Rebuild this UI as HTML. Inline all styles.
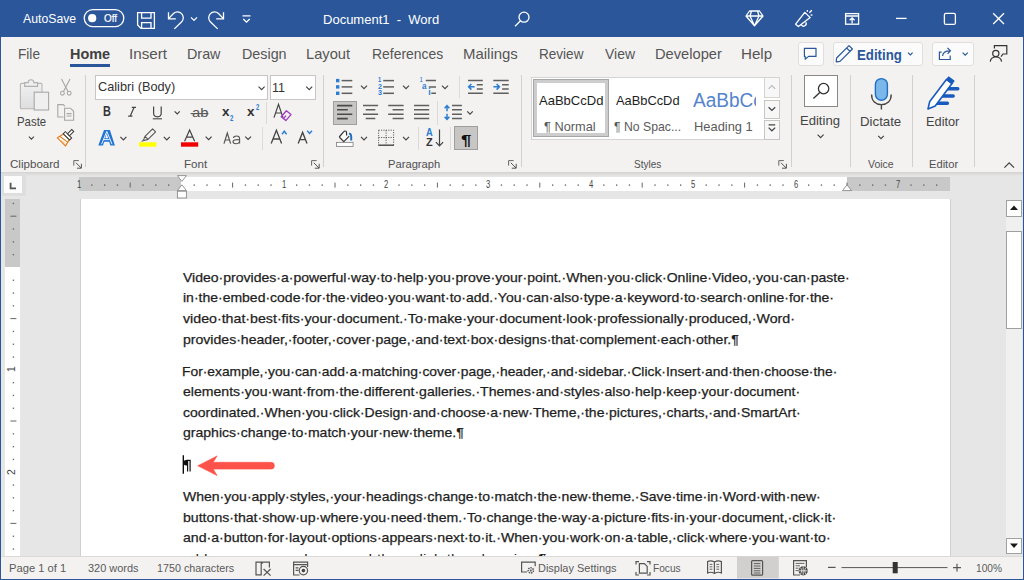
<!DOCTYPE html>
<html><head><meta charset="utf-8">
<style>
*{margin:0;padding:0;box-sizing:border-box}
html,body{width:1024px;height:580px;overflow:hidden;background:#2b579a;font-family:"Liberation Sans",sans-serif;position:relative}
.a{position:absolute}
.t{position:absolute;white-space:pre;line-height:1;transform-origin:0 0}
.sep{position:absolute;width:1px;background:#d2d0ce}
svg{position:absolute;overflow:visible}
</style></head><body>
<div class="a" style="left:0;top:0;width:1024px;height:37px;background:#2b579a"></div>
<div class="a" style="left:1px;top:37px;width:1022px;height:135px;background:#f3f2f1"></div>
<div class="a" style="left:1px;top:172px;width:1022px;height:384px;background:#e6e6e6"></div>
<div class="a" style="left:1px;top:556px;width:1022px;height:23px;background:#f3f2f1;border-top:1px solid #dcdad8"></div>
<div class="a" style="left:81px;top:199px;width:869px;height:357px;background:#fff"></div>
<div class="a" style="left:1px;top:172px;width:1022px;height:4px;background:linear-gradient(#d4d2d0,#e6e6e6)"></div>
<div class="a" style="left:2px;top:173px;width:24px;height:23px;background:#dedede"></div>
<div class="a" style="left:4px;top:176.4px;width:17.6px;height:16.4px;background:#fcfcfc"></div>
<div class="a" style="left:78.7px;top:176.9px;width:871px;height:14.1px;background:#fff"></div>
<div class="a" style="left:78.7px;top:176.9px;width:102.7px;height:14.1px;background:#c8c8c8"></div>
<div class="a" style="left:847px;top:176.9px;width:102.7px;height:14.1px;background:#c8c8c8"></div>
<div class="a" style="left:80px;top:199px;width:1px;height:357px;background:#d0d0d0"></div>
<div class="a" style="left:950px;top:199px;width:1px;height:357px;background:#cfcfcf"></div>
<div class="a" style="left:5px;top:199.1px;width:14.9px;height:357px;background:#fff"></div>
<div class="a" style="left:5px;top:199.1px;width:14.9px;height:68.3px;background:#c8c8c8"></div>
<div class="a" style="left:1006.2px;top:216.6px;width:15.6px;height:322px;background:#f0f0f0"></div>
<div class="a" style="left:1006.2px;top:200.4px;width:15.6px;height:16.2px;background:#fff;border:1px solid #a0a0a0"></div>
<div class="a" style="left:1006.2px;top:231.2px;width:15.6px;height:98px;background:#fff;border:1px solid #a0a0a0"></div>
<div class="a" style="left:1006.2px;top:538.3px;width:15.6px;height:15.6px;background:#fff;border:1px solid #a0a0a0"></div>
<svg width="1024" height="580" style="left:0;top:0"><path d="M10.6,182.8 V188.4 H16" fill="none" stroke="#555" stroke-width="1.8"/>
<rect x="91.2" y="184.4" width="1.3" height="1.4" fill="#666"/>
<rect x="104.0" y="184.4" width="1.3" height="1.4" fill="#666"/>
<rect x="116.8" y="184.4" width="1.3" height="1.4" fill="#666"/>
<path d="M130.2,182.6 V187.6" stroke="#666" stroke-width="1"/>
<rect x="142.4" y="184.4" width="1.3" height="1.4" fill="#666"/>
<rect x="155.2" y="184.4" width="1.3" height="1.4" fill="#666"/>
<rect x="168.0" y="184.4" width="1.3" height="1.4" fill="#666"/>
<rect x="193.6" y="184.4" width="1.3" height="1.4" fill="#666"/>
<rect x="206.4" y="184.4" width="1.3" height="1.4" fill="#666"/>
<rect x="219.2" y="184.4" width="1.3" height="1.4" fill="#666"/>
<path d="M232.6,182.6 V187.6" stroke="#666" stroke-width="1"/>
<rect x="244.8" y="184.4" width="1.3" height="1.4" fill="#666"/>
<rect x="257.6" y="184.4" width="1.3" height="1.4" fill="#666"/>
<rect x="270.4" y="184.4" width="1.3" height="1.4" fill="#666"/>
<rect x="296.0" y="184.4" width="1.3" height="1.4" fill="#666"/>
<rect x="308.8" y="184.4" width="1.3" height="1.4" fill="#666"/>
<rect x="321.6" y="184.4" width="1.3" height="1.4" fill="#666"/>
<path d="M335.0,182.6 V187.6" stroke="#666" stroke-width="1"/>
<rect x="347.2" y="184.4" width="1.3" height="1.4" fill="#666"/>
<rect x="360.0" y="184.4" width="1.3" height="1.4" fill="#666"/>
<rect x="372.8" y="184.4" width="1.3" height="1.4" fill="#666"/>
<rect x="398.4" y="184.4" width="1.3" height="1.4" fill="#666"/>
<rect x="411.2" y="184.4" width="1.3" height="1.4" fill="#666"/>
<rect x="424.0" y="184.4" width="1.3" height="1.4" fill="#666"/>
<path d="M437.4,182.6 V187.6" stroke="#666" stroke-width="1"/>
<rect x="449.6" y="184.4" width="1.3" height="1.4" fill="#666"/>
<rect x="462.4" y="184.4" width="1.3" height="1.4" fill="#666"/>
<rect x="475.2" y="184.4" width="1.3" height="1.4" fill="#666"/>
<rect x="500.8" y="184.4" width="1.3" height="1.4" fill="#666"/>
<rect x="513.6" y="184.4" width="1.3" height="1.4" fill="#666"/>
<rect x="526.4" y="184.4" width="1.3" height="1.4" fill="#666"/>
<path d="M539.8,182.6 V187.6" stroke="#666" stroke-width="1"/>
<rect x="552.0" y="184.4" width="1.3" height="1.4" fill="#666"/>
<rect x="564.8" y="184.4" width="1.3" height="1.4" fill="#666"/>
<rect x="577.6" y="184.4" width="1.3" height="1.4" fill="#666"/>
<rect x="603.2" y="184.4" width="1.3" height="1.4" fill="#666"/>
<rect x="616.0" y="184.4" width="1.3" height="1.4" fill="#666"/>
<rect x="628.8" y="184.4" width="1.3" height="1.4" fill="#666"/>
<path d="M642.2,182.6 V187.6" stroke="#666" stroke-width="1"/>
<rect x="654.4" y="184.4" width="1.3" height="1.4" fill="#666"/>
<rect x="667.2" y="184.4" width="1.3" height="1.4" fill="#666"/>
<rect x="680.0" y="184.4" width="1.3" height="1.4" fill="#666"/>
<rect x="705.6" y="184.4" width="1.3" height="1.4" fill="#666"/>
<rect x="718.4" y="184.4" width="1.3" height="1.4" fill="#666"/>
<rect x="731.2" y="184.4" width="1.3" height="1.4" fill="#666"/>
<path d="M744.6,182.6 V187.6" stroke="#666" stroke-width="1"/>
<rect x="756.8" y="184.4" width="1.3" height="1.4" fill="#666"/>
<rect x="769.6" y="184.4" width="1.3" height="1.4" fill="#666"/>
<rect x="782.4" y="184.4" width="1.3" height="1.4" fill="#666"/>
<rect x="808.0" y="184.4" width="1.3" height="1.4" fill="#666"/>
<rect x="820.8" y="184.4" width="1.3" height="1.4" fill="#666"/>
<rect x="833.6" y="184.4" width="1.3" height="1.4" fill="#666"/>
<path d="M847.0,182.6 V187.6" stroke="#666" stroke-width="1"/>
<rect x="859.2" y="184.4" width="1.3" height="1.4" fill="#666"/>
<rect x="872.0" y="184.4" width="1.3" height="1.4" fill="#666"/>
<rect x="884.8" y="184.4" width="1.3" height="1.4" fill="#666"/>
<rect x="910.4" y="184.4" width="1.3" height="1.4" fill="#666"/>
<rect x="923.2" y="184.4" width="1.3" height="1.4" fill="#666"/>
<rect x="936.0" y="184.4" width="1.3" height="1.4" fill="#666"/>
<path d="M177.4,175.6 H186.4 L181.9,181.4 Z" fill="#fff" stroke="#8a8a8a" stroke-width="0.9"/>
<path d="M181.9,184.8 L186.4,190.6 H177.4 Z" fill="#fff" stroke="#8a8a8a" stroke-width="0.9"/>
<rect x="177.4" y="191.2" width="9" height="6.8" fill="#fff" stroke="#8a8a8a" stroke-width="0.9"/>
<path d="M847,184.8 L851.5,190.6 H842.5 Z" fill="#fff" stroke="#8a8a8a" stroke-width="0.9"/>
<rect x="12.7" y="202.8" width="1.4" height="1.3" fill="#666"/>
<path d="M10.4,216.2 H16.4" stroke="#666" stroke-width="1"/>
<rect x="12.7" y="228.4" width="1.4" height="1.3" fill="#666"/>
<rect x="12.7" y="241.2" width="1.4" height="1.3" fill="#666"/>
<rect x="12.7" y="254.0" width="1.4" height="1.3" fill="#666"/>
<rect x="12.7" y="279.6" width="1.4" height="1.3" fill="#666"/>
<rect x="12.7" y="292.4" width="1.4" height="1.3" fill="#666"/>
<rect x="12.7" y="305.2" width="1.4" height="1.3" fill="#666"/>
<path d="M10.4,318.6 H16.4" stroke="#666" stroke-width="1"/>
<rect x="12.7" y="330.8" width="1.4" height="1.3" fill="#666"/>
<rect x="12.7" y="343.6" width="1.4" height="1.3" fill="#666"/>
<rect x="12.7" y="356.4" width="1.4" height="1.3" fill="#666"/>
<rect x="12.7" y="382.0" width="1.4" height="1.3" fill="#666"/>
<rect x="12.7" y="394.8" width="1.4" height="1.3" fill="#666"/>
<rect x="12.7" y="407.6" width="1.4" height="1.3" fill="#666"/>
<path d="M10.4,421.0 H16.4" stroke="#666" stroke-width="1"/>
<rect x="12.7" y="433.2" width="1.4" height="1.3" fill="#666"/>
<rect x="12.7" y="446.0" width="1.4" height="1.3" fill="#666"/>
<rect x="12.7" y="458.8" width="1.4" height="1.3" fill="#666"/>
<rect x="12.7" y="484.4" width="1.4" height="1.3" fill="#666"/>
<rect x="12.7" y="497.2" width="1.4" height="1.3" fill="#666"/>
<rect x="12.7" y="510.0" width="1.4" height="1.3" fill="#666"/>
<path d="M10.4,523.4 H16.4" stroke="#666" stroke-width="1"/>
<rect x="12.7" y="535.6" width="1.4" height="1.3" fill="#666"/>
<rect x="12.7" y="548.4" width="1.4" height="1.3" fill="#666"/>
<path d="M1010,210 L1014,205.5 L1018,210 Z" fill="#1a1a1a"/>
<path d="M1010,543.6 L1014,548.1 L1018,543.6 Z" fill="#1a1a1a"/>
<path d="M183.3,455.3 V473.8" stroke="#000" stroke-width="1.3"/>
<path d="M197.8,465.8 L217.1,455.9 L213.2,462.3 H271 A3.4,3.4 0 0 1 271,469.1 H213.2 L217.1,475.6 Z" fill="#fd5249" stroke="#fd5249" stroke-width="0.6" stroke-linejoin="round"/>
<path d="M261.2,562.2 H256 V574.8 H261.2 V562.2 H269.4 V567.4 M261.2,562.2 L262.6,563.6" fill="none" stroke="#555" stroke-width="1.2"/>
<path d="M263.6,569 L270.6,575.6 M270.6,569 L263.6,575.6" fill="none" stroke="#555" stroke-width="1.2"/>
<path d="M299.6,575 H293.6 V562.2 H307.6 V567" fill="none" stroke="#555" stroke-width="1.2"/>
<path d="M293.6,564.6 H307.6 M295.6,567.8 H298.4 M295.6,570.4 H298.4" fill="none" stroke="#555" stroke-width="1.2"/>
<circle cx="303.4" cy="570.6" r="4.2" fill="none" stroke="#555" stroke-width="1.2"/>
<circle cx="303.4" cy="570.6" r="1.8" fill="#444"/>
<path d="M527,572 H521.6 V562.2 H535.2 V566.2" fill="none" stroke="#555" stroke-width="1.2"/>
<circle cx="530.8" cy="570.4" r="2.6" fill="none" stroke="#555" stroke-width="1.6" stroke-dasharray="1.4 0.9"/>
<circle cx="530.8" cy="570.4" r="1" fill="#555"/>
<path d="M636,564.6 V561.6 H639 M647,561.6 H650 V564.6 M650,572 V575 H647 M639,575 H636 V572" fill="none" stroke="#555" stroke-width="1.2"/>
<path d="M639.4,563.6 H644.4 L647.2,566.4 V573.2 H639.4 Z" fill="none" stroke="#555" stroke-width="1.2"/>
<path d="M714.4,562 C712,560.6 709.6,560.6 707.6,561.6 V573 C709.6,572 712,572 714.4,573.4 C716.8,572 719.4,572 721.4,573 V561.6 C719.4,560.6 716.8,560.6 714.4,562 Z M714.4,562 V573.4" fill="none" stroke="#555" stroke-width="1.2"/>
<path d="M709.6,564.4 H712.4 M709.6,566.8 H712.4 M709.6,569.2 H712.4 M716.4,564.4 H719.2 M716.4,566.8 H719.2 M716.4,569.2 H719.2" stroke="#555" stroke-width="0.9"/>
<path d="M737,556.5 H778.8 V578.6 H737 Z" fill="#d2d0ce"/>
<rect x="751.6" y="560.6" width="11" height="14.6" rx="1" fill="none" stroke="#555" stroke-width="1.2"/>
<path d="M753.8,563.6 H760.4 M753.8,566 H760.4 M753.8,568.4 H760.4 M753.8,570.8 H760.4 M753.8,573 H760.4" stroke="#555" stroke-width="0.9"/>
<path d="M800,575 H793.6 V560.6 H806.4 V567" fill="none" stroke="#555" stroke-width="1.2"/>
<path d="M795.6,563.4 H804.4 M795.6,565.8 H800 M795.6,568.2 H798.6 M795.6,570.6 H798.6" stroke="#555" stroke-width="0.9"/>
<circle cx="803.2" cy="570.8" r="4.6" fill="#444"/>
<path d="M798.8,570.8 H807.6 M803.2,566.4 V575.2 M800.6,567.6 C802,570 802,571.6 800.6,574 M805.8,567.6 C804.4,570 804.4,571.6 805.8,574" fill="none" stroke="#f3f2f1" stroke-width="0.8"/>
<path d="M828,567.4 H835.6" stroke="#555" stroke-width="1.2"/>
<path d="M841.5,567.6 H947.5" stroke="#555" stroke-width="1"/>
<rect x="892.7" y="562" width="5" height="11.3" fill="#333"/>
<path d="M953,567.6 H961 M957,563.8 V571.4" stroke="#555" stroke-width="1.2"/></svg>
<div class="t" style="left:77.40px;top:180.36px;font-size:10.4px;color:#444;transform:scaleX(0.7333);">1</div>
<div class="t" style="left:281.60px;top:180.36px;font-size:10.4px;color:#444;transform:scaleX(0.7333);">1</div>
<div class="t" style="left:384.00px;top:180.36px;font-size:10.4px;color:#444;transform:scaleX(0.7333);">2</div>
<div class="t" style="left:486.40px;top:180.36px;font-size:10.4px;color:#444;transform:scaleX(0.7333);">3</div>
<div class="t" style="left:588.80px;top:180.36px;font-size:10.4px;color:#444;transform:scaleX(0.7333);">4</div>
<div class="t" style="left:691.20px;top:180.36px;font-size:10.4px;color:#444;transform:scaleX(0.7333);">5</div>
<div class="t" style="left:793.60px;top:180.36px;font-size:10.4px;color:#444;transform:scaleX(0.7333);">6</div>
<div class="t" style="left:896.00px;top:180.36px;font-size:10.4px;color:#444;transform:scaleX(0.7333);">7</div>
<div class="t" style="left:7.2px;top:364.4px;font-size:10.4px;color:#444;transform:rotate(-90deg);transform-origin:50% 50%;width:11px;text-align:center">1</div>
<div class="t" style="left:7.2px;top:466.8px;font-size:10.4px;color:#444;transform:rotate(-90deg);transform-origin:50% 50%;width:11px;text-align:center">2</div>
<svg width="1024" height="37" style="left:0;top:0">
<rect x="84.2" y="9.6" width="39.6" height="17" rx="8.5" fill="none" stroke="#fff" stroke-width="1.3"/>
<circle cx="92.2" cy="18.2" r="4.1" fill="#fff"/>
<path d="M137.6,12.6 H154.4 V28.4 H141 L137.6,25 Z" fill="none" stroke="#fff" stroke-width="1.3"/>
<path d="M141.6,12.6 V18.2 H151 V12.6" fill="none" stroke="#fff" stroke-width="1.3"/>
<path d="M141.6,28.4 V22.6 H151 V28.4" fill="none" stroke="#fff" stroke-width="1.3"/>
<path d="M168.5,12.2 V18.8 H175.8" fill="none" stroke="#fff" stroke-width="1.3"/>
<path d="M168.8,18.4 L173.5,13.5 A5.8,5.8 0 0 1 181.7,21.7 L174.3,28.9" fill="none" stroke="#fff" stroke-width="1.3"/>
<path d="M191,17.4 L194,20.4 L197,17.4" fill="none" stroke="#fff" stroke-width="1.3"/>
<path d="M223.5,12.2 V18.8 H216.2" fill="none" stroke="#fff" stroke-width="1.3"/>
<path d="M223.2,18.4 L218.5,13.5 A5.8,5.8 0 0 0 210.3,21.7 L217.7,28.9" fill="none" stroke="#fff" stroke-width="1.3"/>
<path d="M242.5,15.8 H250.5 M243.3,19 L246.5,22.2 L249.7,19" fill="none" stroke="#fff" stroke-width="1.3"/>
<circle cx="524" cy="17.2" r="5" fill="none" stroke="#fff" stroke-width="1.3"/>
<path d="M520.5,20.7 L515,26.2" fill="none" stroke="#fff" stroke-width="1.3"/>
<path d="M749.5,11 H759.5 L763,16 L754.5,25.8 L746,16 Z M746,16 H763 M751.5,11 L750,16 L754.5,25.8 L759,16 L757.5,11" fill="none" stroke="#fff" stroke-width="1.3" stroke-linejoin="round"/>
<path d="M795.6,24.2 L804.8,12.4 L810.2,17.6 L798.4,26.6 Z M801.2,24.8 A2.5,2.5 0 0 0 805.8,22.2" fill="none" stroke="#fff" stroke-width="1.3" stroke-linejoin="round"/>
<path d="M807.4,10 V11.8 M809.4,12.8 L811.8,10.2 M810.6,15.2 L812.4,15" fill="none" stroke="#fff" stroke-width="1.3"/>
<rect x="845.6" y="13.6" width="13" height="10.6" fill="none" stroke="#fff" stroke-width="1.3"/>
<path d="M845.6,16 H858.6 M852.1,23.6 V17.8 M849.6,20.2 L852.1,17.8 L854.6,20.2" fill="none" stroke="#fff" stroke-width="1.3"/>
<path d="M896,18.4 H906.6" fill="none" stroke="#fff" stroke-width="1.3"/>
<rect x="944.4" y="13.4" width="11" height="11" rx="1.5" fill="none" stroke="#fff" stroke-width="1.3"/>
<path d="M993.2,13.2 L1004,24 M1004,13.2 L993.2,24" fill="none" stroke="#fff" stroke-width="1.3"/>
</svg>
<div class="t" style="left:23.40px;top:11.53px;font-size:13.5px;color:#ffffff;transform:scaleX(0.9081);">AutoSave</div>
<div class="t" style="left:103.60px;top:12.83px;font-size:11.5px;color:#ffffff;transform:scaleX(0.8662);-webkit-text-stroke:0.2px #fff;">Off</div>
<div class="t" style="left:322.64px;top:13.42px;font-size:13.5px;color:#ffffff;transform:scaleX(0.9636);">Document1  -  Word</div>
<div class="a" style="left:797.5px;top:41.7px;width:26.3px;height:24.7px;background:#fbfbfb;border:1px solid #e1dfdd;border-radius:3px"></div>
<div class="a" style="left:833px;top:41.7px;width:89.5px;height:24.7px;background:#fbfbfb;border:1px solid #e1dfdd;border-radius:3px"></div>
<div class="a" style="left:931.7px;top:41.7px;width:42.3px;height:24.7px;background:#fbfbfb;border:1px solid #e1dfdd;border-radius:3px"></div>
<svg width="1024" height="80" style="left:0;top:0">
<path d="M804.4,48.4 H816 V56.4 H808.6 L805.2,59.2 V56.4 H804.4 Z" fill="none" stroke="#2b579a" stroke-width="1.2" stroke-linejoin="round"/>
<path d="M849,45.6 L852.4,49 L840,61.4 L836.2,61.8 L836.6,58 Z M846.6,48 L850,51.4" fill="none" stroke="#2b579a" stroke-width="1.2" stroke-width="1.4" stroke-linejoin="round"/>
<path d="M908,52.6 L910.3,54.9 L912.6,52.6" fill="none" stroke="#2b579a" stroke-width="1.2"/>
<path d="M941.6,52.1 H939.4 V59.5 H950.2 V55.4" fill="none" stroke="#2b579a" stroke-width="1.2"/>
<path d="M942.6,56 C942.8,52.6 945.2,50.8 949.8,50.8 M947.4,47.8 L950.4,50.8 L947.6,53.8" fill="none" stroke="#2b579a" stroke-width="1.2"/>
<path d="M962.6,52.6 L965.2,55.2 L967.8,52.6" fill="none" stroke="#2b579a" stroke-width="1.2"/>
<path d="M994.4,48.6 V45.6 H1006.8 V54 H1003 L1001,56.6" fill="none" stroke="#333" stroke-width="1.2"/>
<circle cx="995.8" cy="53.4" r="3.1" fill="none" stroke="#333" stroke-width="1.2"/>
<path d="M990.2,61.6 C990.8,58.3 992.8,57 995.8,57 C999,57 1001,58.3 1001.6,61.6" fill="none" stroke="#333" stroke-width="1.2"/>
</svg>
<div class="t" style="left:857.40px;top:47.67px;font-size:14.5px;color:#2b579a;font-weight:bold;transform:scaleX(0.9136);">Editing</div>
<div class="sep" style="left:84.9px;top:75px;height:92px"></div>
<div class="sep" style="left:323.0px;top:75px;height:92px"></div>
<div class="sep" style="left:520.5px;top:75px;height:92px"></div>
<div class="sep" style="left:791.0px;top:75px;height:92px"></div>
<div class="sep" style="left:850.3px;top:75px;height:92px"></div>
<div class="sep" style="left:912.2px;top:75px;height:92px"></div>
<div class="sep" style="left:973.7px;top:75px;height:92px"></div>
<div class="sep" style="left:265.9px;top:102px;height:22px;background:#dcdad8"></div>
<div class="sep" style="left:262.3px;top:127.4px;height:22.19999999999999px;background:#dcdad8"></div>
<div class="sep" style="left:459.0px;top:76px;height:22px;background:#dcdad8"></div>
<div class="sep" style="left:436.8px;top:101px;height:24px;background:#dcdad8"></div>
<div class="sep" style="left:417.9px;top:127px;height:23px;background:#dcdad8"></div>
<div class="sep" style="left:449.7px;top:127px;height:23px;background:#dcdad8"></div>
<svg width="1024" height="180" style="left:0;top:0">
<defs><linearGradient id="pg" x1="0" y1="0" x2="0" y2="1"><stop offset="0" stop-color="#f0f0f0"/><stop offset="1" stop-color="#dedede"/></linearGradient></defs>
<rect x="20.4" y="83.4" width="21.6" height="25.4" rx="1" fill="url(#pg)" stroke="#b8b8b8" stroke-width="1.1"/>
<path d="M24.6,86.4 V82.6 H28.2 A2.8,2.8 0 0 1 33.8,82.6 H37.6 V86.4 Z" fill="#eeeeee" stroke="#b0b0b0" stroke-width="1.1"/>
<rect x="34.2" y="92.2" width="14.4" height="17.8" fill="#efefef" stroke="#a8a8a8" stroke-width="1.1"/>
<path d="M28.9,136.6 L31.4,139.1 L33.9,136.6" fill="none" stroke="#444" stroke-width="1.1"/>
<path d="M61.5,79 L68,91.5 M70,79 L63.5,91.5" fill="none" stroke="#a6a6a6" stroke-width="1.1"/>
<circle cx="62.4" cy="93.2" r="1.9" fill="none" stroke="#a6a6a6" stroke-width="1.1"/>
<circle cx="69.2" cy="93.2" r="1.9" fill="none" stroke="#a6a6a6" stroke-width="1.1"/>
<path d="M63.5,117 H57.8 V104.6 H63.2 L65,106.4" fill="none" stroke="#a6a6a6" stroke-width="1.1"/>
<path d="M64.6,108.2 H70.5 L73.6,111.3 V120.2 H64.6 Z M66.6,113.6 H71.6 M66.6,116 H71.6" fill="none" stroke="#a6a6a6" stroke-width="1.1"/>
<g transform="translate(67.4,135.9) rotate(45) scale(0.86)">
<path d="M-4.8,1.6 H4.8 L6.6,9.8 H-6.6 Z" fill="#fff" stroke="#e07b1a" stroke-width="1.4" stroke-linejoin="round"/>
<path d="M-5.6,6.6 L5.4,4.8" stroke="#e07b1a" stroke-width="1.3"/>
<path d="M-2,9 L4.8,8" stroke="#f6c48e" stroke-width="1.2"/>
<rect x="-5.2" y="-1.8" width="10.4" height="3.4" fill="#fff" stroke="#3a3a3a" stroke-width="1.2"/>
<rect x="-1.6" y="-8.8" width="3.2" height="7" fill="#fff" stroke="#3a3a3a" stroke-width="1.2"/>
</g>
<path d="M73.8,165.6 V160.6 H78.8" fill="none" stroke="#666" stroke-width="1"/><path d="M76.0,162.8 L81.2,168 M81.4,163.8 V168.2 H77.0" fill="none" stroke="#555" stroke-width="1"/>
</svg>
<div class="t" style="left:16.84px;top:114.58px;font-size:13.2px;color:#444;transform:scaleX(0.8645);">Paste</div>
<div class="t" style="left:9.70px;top:158.57px;font-size:11.8px;color:#505050;transform:scaleX(0.9813);">Clipboard</div>
<div class="a" style="left:95.2px;top:75.2px;width:172.4px;height:24.4px;background:#fff;border:1px solid #c8c6c4"></div>
<div class="a" style="left:270px;top:75.2px;width:45.5px;height:24.4px;background:#fff;border:1px solid #c8c6c4"></div>
<div class="t" style="left:97.60px;top:80.48px;font-size:13.2px;color:#333;transform:scaleX(0.9662);">Calibri (Body)</div>
<div class="t" style="left:272.05px;top:80.58px;font-size:13.2px;color:#333;transform:scaleX(0.9470);">11</div>
<svg width="1024" height="180" style="left:0;top:0">
<path d="M258.6,86.6 L261.6,89.6 L264.6,86.6" fill="none" stroke="#444" stroke-width="1.2"/>
<path d="M306.2,86.6 L309.2,89.6 L312.2,86.6" fill="none" stroke="#444" stroke-width="1.2"/>
<path d="M174.6,111.4 L177.2,114 L179.8,111.4" fill="none" stroke="#444" stroke-width="1.2"/>
<path d="M153.6,106.6 V113 C153.6,115.6 155,116.8 157.4,116.8 C159.8,116.8 161.2,115.6 161.2,113 V106.6" fill="none" stroke="#444" stroke-width="1.2"/>
<path d="M152.8,118.8 H162" stroke="#444" stroke-width="1.1"/>
<path d="M131.8,107.4 H136 M128.2,116.2 H132.4 M134,107.4 L130.2,116.2" fill="none" stroke="#444" stroke-width="1.2"/>
<path d="M190.6,113.6 H208.4" stroke="#555" stroke-width="1.1"/>
<path d="M120.4,136.8 L123.4,139.8 L126.4,136.8" fill="none" stroke="#444" stroke-width="1.2"/>
<path d="M163.8,136.8 L166.8,139.8 L169.8,136.8" fill="none" stroke="#444" stroke-width="1.2"/>
<path d="M205.6,136.6 L208.6,139.6 L211.6,136.6" fill="none" stroke="#444" stroke-width="1.2"/>
<path d="M245.2,136.6 L248.1,139.5 L251,136.6" fill="none" stroke="#444" stroke-width="1.2"/>
<path d="M98.3,145.4 L104,129.9 H109.9 L114.9,145.4 H110.4 L109.2,141.8 H104.2 L103,145.4 Z M105.2,138.2 H108.2 L106.7,133.4 Z" fill="#1f74d4" fill-rule="evenodd"/>
<path d="M101.6,144.2 L106.8,131.4 L112,144.2 M104,139.6 H109.6" fill="none" stroke="#fff" stroke-width="0.9"/>
<rect x="139" y="142.3" width="17.4" height="4.4" fill="#ffff00"/>
<path d="M143.2,140.8 L145,136.4 L152.6,128.8 L155.6,131.8 L148,139.4 L143.2,140.8 Z M145,136.4 L148,139.4" fill="none" stroke="#555" stroke-width="1.1" stroke-linejoin="round"/>
<path d="M141.6,141.6 L144,139.6" stroke="#777" stroke-width="1.2"/>
<rect x="181" y="142.3" width="17.2" height="4.4" fill="#f00000"/>
<path d="M184.6,141.2 L189.6,130 L194.6,141.2 M186.4,137.2 H192.8" fill="none" stroke="#444" stroke-width="1.2"/>
<path d="M224,143.6 L227.3,133 L230.6,143.6 M225.2,140 H229.4" fill="none" stroke="#555" stroke-width="1.2"/>
<path d="M239.6,143.6 V138.6 C239.6,136.8 238.6,136 236.6,136 C234.4,136 233.6,137 233.4,138 M239.6,140 C238.6,139.6 233,139.2 233,141.6 C233,143 234,143.8 235.8,143.8 C237.6,143.8 239.2,142.6 239.6,141.6" fill="none" stroke="#555" stroke-width="1.1"/>
<path d="M271.2,143.6 L276.4,130.2 L281.6,143.6 M273,139 H279.8" fill="none" stroke="#444" stroke-width="1.3"/>
<path d="M282,134.2 L284.3,131.2 L286.6,134.2" fill="none" stroke="#2b7cd3" stroke-width="1.4"/>
<path d="M298.2,143.6 L302.6,132.4 L307,143.6 M299.8,139.6 H305.4" fill="none" stroke="#444" stroke-width="1.3"/>
<path d="M307.2,130.8 L309.6,133.4 L312,130.8" fill="none" stroke="#2b7cd3" stroke-width="1.4"/>
<path d="M274,117.6 L278.5,104.4 L283,117.6 M275.8,113 H281.4" fill="none" stroke="#444" stroke-width="1.2"/>
<path d="M281.2,116.8 L286.4,110.8 L291,114.6 L285.8,120.6 Z M283.4,118.6 L286,115.6" fill="none" stroke="#9e3bbd" stroke-width="1.3" stroke-linejoin="round"/>
<path d="M311.6,165.6 V160.6 H316.6" fill="none" stroke="#666" stroke-width="1"/><path d="M313.8,162.8 L319.0,168 M319.2,163.8 V168.2 H314.8" fill="none" stroke="#555" stroke-width="1"/>
</svg>
<div class="t" style="left:103.10px;top:105.07px;font-size:13.8px;color:#333;font-weight:bold;transform:scaleX(0.7900);">B</div>
<div class="t" style="left:191.60px;top:106.18px;font-size:13.2px;color:#555;transform:scaleX(1.1162);">ab</div>
<div class="t" style="left:222.00px;top:105.23px;font-size:13.5px;color:#333;font-weight:bold;">x</div>
<div class="t" style="left:230.00px;top:113.78px;font-size:8.5px;color:#2b7cd3;font-weight:bold;transform:scaleX(0.7200);">2</div>
<div class="t" style="left:247.00px;top:105.23px;font-size:13.5px;color:#333;font-weight:bold;">x</div>
<div class="t" style="left:255.60px;top:102.58px;font-size:8.5px;color:#2b7cd3;font-weight:bold;transform:scaleX(0.7000);">2</div>
<div class="t" style="left:184.00px;top:158.57px;font-size:11.8px;color:#505050;transform:scaleX(0.9865);">Font</div>
<div class="a" style="left:333px;top:101px;width:23.7px;height:24.1px;background:#c8c6c4;border:1px solid #a19f9d"></div>
<div class="a" style="left:454.3px;top:126.2px;width:23.4px;height:24.1px;background:#c8c6c4;border:1px solid #a19f9d"></div>
<svg width="1024" height="180" style="left:0;top:0"><rect x="336" y="78.9" width="3.4" height="3.4" fill="#2b7cd3"/>
<path d="M341.6,80.6 H352.3" stroke="#5f5f5f" stroke-width="1.5"/>
<rect x="336" y="85.2" width="3.4" height="3.4" fill="#2b7cd3"/>
<path d="M341.6,86.9 H352.3" stroke="#5f5f5f" stroke-width="1.5"/>
<rect x="336" y="91.6" width="3.4" height="3.4" fill="#2b7cd3"/>
<path d="M341.6,93.3 H352.3" stroke="#5f5f5f" stroke-width="1.5"/>
<path d="M361,85.6 L364,88.6 L367,85.6" fill="none" stroke="#444" stroke-width="1.2"/>
<path d="M383.2,80.6 H394" stroke="#5f5f5f" stroke-width="1.5"/>
<path d="M383.2,86.9 H394" stroke="#5f5f5f" stroke-width="1.5"/>
<path d="M383.2,93.3 H394" stroke="#5f5f5f" stroke-width="1.5"/>
<path d="M403,85.6 L406,88.6 L409,85.6" fill="none" stroke="#444" stroke-width="1.2"/>
<path d="M425.8,80.6 H436 M428.8,86.9 H436 M431.3,93.3 H436" stroke="#5f5f5f" stroke-width="1.5"/>
<path d="M442,85.6 L445,88.6 L448,85.6" fill="none" stroke="#444" stroke-width="1.2"/>
<path d="M468,80.6 H482.8 M476.8,84.8 H482.8 M476.8,88.9 H482.8 M468,93.3 H482.8" stroke="#5f5f5f" stroke-width="1.5"/>
<path d="M474.6,86.8 H468.6 M471.4,84 L468.6,86.8 L471.4,89.6" fill="none" stroke="#2b7cd3" stroke-width="1.5"/>
<path d="M493.3,80.6 H508.7 M502.1,84.8 H508.7 M502.1,88.9 H508.7 M493.3,93.3 H508.7" stroke="#5f5f5f" stroke-width="1.5"/>
<path d="M493.4,86.8 H499.4 M496.6,84 L499.4,86.8 L496.6,89.6" fill="none" stroke="#2b7cd3" stroke-width="1.5"/>
<path d="M337.1,105.6 H352.3 M337.1,109.8 H347.8 M337.1,114.2 H352.3 M337.1,118.6 H347.8" stroke="#4a4a4a" stroke-width="1.6"/>
<path d="M363,105.6 H378.1 M365.7,109.8 H375.3 M363,114.2 H378.1 M365.7,118.6 H375.3" stroke="#5f5f5f" stroke-width="1.5"/>
<path d="M388.2,105.6 H403.6 M392.6,109.8 H403.6 M388.2,114.2 H403.6 M392.6,118.6 H403.6" stroke="#5f5f5f" stroke-width="1.5"/>
<path d="M414,105.6 H429.2 M414,109.8 H429.2 M414,114.2 H429.2 M414,118.6 H429.2" stroke="#5f5f5f" stroke-width="1.5"/>
<path d="M452,105.6 H461.9 M452,109.8 H461.9 M452,114.2 H461.9 M452,118.6 H461.9" stroke="#5f5f5f" stroke-width="1.5"/>
<path d="M447,105.8 V111.2 M444.6,108.2 L447,105.6 L449.4,108.2 M447,113.8 V119.2 M444.6,116.8 L447,119.4 L449.4,116.8" fill="none" stroke="#2b7cd3" stroke-width="1.5"/>
<path d="M467.2,111.4 L470,114.2 L472.8,111.4" fill="none" stroke="#444" stroke-width="1.2"/>
<rect x="336.5" y="142.4" width="16.6" height="4" fill="#fff" stroke="#8a8a8a" stroke-width="0.9"/>
<path d="M339.2,137 L343.8,141.6 L349.2,136.2 M339.2,137 L343.4,132.2 C344.4,130.6 346.4,130.6 346.5,132.4 L346.6,135.6" fill="#fff" stroke="#333" stroke-width="1.2" stroke-linejoin="round"/>
<path d="M349,133.8 C350.6,133.6 351.2,135 351.2,136.6 V140.4" fill="none" stroke="#1f6fc5" stroke-width="2"/>
<path d="M361,136.8 L364,139.8 L367,136.8" fill="none" stroke="#444" stroke-width="1.2"/>
<path d="M378.6,130.2 H393.6 V144.8 M378.6,130.2 V144.8 M386.1,130.2 V144.8 M378.6,137.5 H393.6" fill="none" stroke="#555" stroke-width="0.9" stroke-dasharray="1.2 1.2"/>
<path d="M378.2,145.2 H394" stroke="#444" stroke-width="1.4"/>
<path d="M403,136.8 L406,139.8 L409,136.8" fill="none" stroke="#444" stroke-width="1.2"/>
<path d="M439.5,129.6 V145.8 M435.9,142.2 L439.5,145.8 L443.1,142.2" fill="none" stroke="#444" stroke-width="1.2"/>
<path d="M508.6,165.6 V160.6 H513.6" fill="none" stroke="#666" stroke-width="1"/><path d="M510.8,162.8 L516.0,168 M516.2,163.8 V168.2 H511.8" fill="none" stroke="#555" stroke-width="1"/>
<path d="M778.8,165.6 V160.6 H783.8" fill="none" stroke="#666" stroke-width="1"/><path d="M781.0,162.8 L786.2,168 M786.4,163.8 V168.2 H782.0" fill="none" stroke="#555" stroke-width="1"/></svg>
<div class="t" style="left:377.80px;top:76.14px;font-size:7.6px;color:#2b7cd3;font-weight:bold;transform:scaleX(0.7600);">1</div>
<div class="t" style="left:377.80px;top:82.54px;font-size:7.6px;color:#2b7cd3;font-weight:bold;transform:scaleX(0.9500);">2</div>
<div class="t" style="left:377.80px;top:88.94px;font-size:7.6px;color:#2b7cd3;font-weight:bold;transform:scaleX(0.9500);">3</div>
<div class="t" style="left:420.00px;top:76.14px;font-size:7.6px;color:#2b7cd3;font-weight:bold;transform:scaleX(0.5600);">1</div>
<div class="t" style="left:422.40px;top:81.92px;font-size:8.8px;color:#2b7cd3;font-weight:bold;transform:scaleX(0.9200);">a</div>
<div class="t" style="left:428.20px;top:87.92px;font-size:8.8px;color:#2b7cd3;font-weight:bold;">i</div>
<div class="t" style="left:425.80px;top:128.33px;font-size:10.2px;color:#2b7cd3;font-weight:bold;transform:scaleX(0.9125);">A</div>
<div class="t" style="left:426.00px;top:137.93px;font-size:10.2px;color:#333;font-weight:bold;transform:scaleX(1.0667);">Z</div>
<div class="t" style="left:460.50px;top:132.50px;font-size:14px;color:#111;font-weight:bold;transform:scaleX(1.3375);">¶</div>
<div class="t" style="left:387.70px;top:158.57px;font-size:11.8px;color:#505050;transform:scaleX(0.9481);">Paragraph</div>
<div class="a" style="left:531.2px;top:77.3px;width:248.4px;height:63px;background:#fff;border:1px solid #d6d4d2"></div>
<div class="a" style="left:532.6px;top:78.9px;width:76.3px;height:58.6px;border:1px solid #a6a6a6"></div>
<div class="a" style="left:533.6px;top:79.9px;width:74.3px;height:56.6px;border:3px solid #cdcdcd"></div>
<div class="a" style="left:764.4px;top:77.3px;width:15.2px;height:63px;background:#fff"></div>
<div class="a" style="left:764.4px;top:77.3px;width:15.2px;height:21px;background:#f7f7f7;border:1px solid #d6d4d2"></div>
<div class="a" style="left:764.4px;top:99.6px;width:15.2px;height:19px;background:#f7f7f7;border:1px solid #c8c6c4"></div>
<div class="a" style="left:764.4px;top:119.6px;width:15.2px;height:20.7px;background:#f7f7f7;border:1px solid #c8c6c4"></div>
<svg width="1024" height="180" style="left:0;top:0">
<path d="M768.6,88.8 L771.9,85.6 L775.2,88.8" fill="none" stroke="#b8b8b8" stroke-width="1.1"/>
<path d="M768.6,107.2 L771.9,110.4 L775.2,107.2" fill="none" stroke="#444" stroke-width="1.3"/>
<path d="M768.6,124.8 H775.2 M768.6,127.6 L771.9,130.8 L775.2,127.6" fill="none" stroke="#444" stroke-width="1.2"/>
</svg>
<div class="t" style="left:538.80px;top:94.05px;font-size:13.0px;color:#1e1e1e;transform:scaleX(1.0019);">AaBbCcDd</div>
<div class="t" style="left:544.30px;top:119.55px;font-size:13.0px;color:#5a5a5a;transform:scaleX(0.9829);">¶ Normal</div>
<div class="t" style="left:615.70px;top:94.05px;font-size:13.0px;color:#1e1e1e;transform:scaleX(0.9879);">AaBbCcDd</div>
<div class="t" style="left:614.30px;top:119.55px;font-size:13.0px;color:#5a5a5a;transform:scaleX(0.9409);">¶ No Spac...</div>
<div class="a" style="left:690px;top:85px;width:66px;height:30px;overflow:hidden">
<div class="t" style="left:3.10px;top:5.54px;font-size:19.6px;color:#5584cc;transform:scaleX(0.9697);">AaBbCc</div>
</div>
<div class="t" style="left:693.91px;top:119.55px;font-size:13.0px;color:#5a5a5a;transform:scaleX(0.9907);">Heading 1</div>
<div class="t" style="left:633.50px;top:158.57px;font-size:11.8px;color:#505050;transform:scaleX(0.8471);">Styles</div>
<div class="a" style="left:804.1px;top:75.2px;width:33.6px;height:32.3px;background:#fff;border:1px solid #8a8886"></div>
<svg width="1024" height="180" style="left:0;top:0">
<circle cx="823.6" cy="88.6" r="5.2" fill="none" stroke="#333" stroke-width="1.3"/>
<path d="M819.8,92.6 L813.4,98.6" stroke="#333" stroke-width="1.4"/>
<path d="M817.6,134.6 L820.6,137.6 L823.6,134.6" fill="none" stroke="#444" stroke-width="1.2"/>
<rect x="875.4" y="78.6" width="12" height="21.6" rx="6" fill="#7cb7ea" stroke="#1f6fc5" stroke-width="1.4"/>
<path d="M871.6,94.6 C871.6,101 875.6,104.6 881.4,104.6 C887.2,104.6 891.2,101 891.2,94.6 M881.4,104.6 V109.4" fill="none" stroke="#444" stroke-width="1.4"/>
<path d="M878.2,135.8 L881,138.6 L883.8,135.8" fill="none" stroke="#444" stroke-width="1.2"/>
<path d="M945,88.8 H957.8 M939.6,96 H953.2 M934.2,103.2 H947.4" stroke="#185abd" stroke-width="3.4" stroke-linecap="round"/>
<path d="M928,109 L929.6,101.8 L946.4,79.4 L952,83.6 L935.2,106 Z" fill="#fff" stroke="#185abd" stroke-width="1.6" stroke-linejoin="round"/>
<path d="M946.6,79.6 L948.6,77 L954,81 L952,83.6 Z" fill="#185abd" stroke="#185abd" stroke-width="1.2" stroke-linejoin="round"/>
<path d="M1004.4,167.6 L1009.2,162.8 L1014,167.6" fill="none" stroke="#444" stroke-width="1.3"/>
</svg>
<div class="t" style="left:800.21px;top:113.98px;font-size:13.2px;color:#444;transform:scaleX(0.9900);">Editing</div>
<div class="t" style="left:860.40px;top:115.08px;font-size:13.2px;color:#444;transform:scaleX(1.0048);">Dictate</div>
<div class="t" style="left:926.23px;top:115.08px;font-size:13.2px;color:#444;transform:scaleX(0.9689);">Editor</div>
<div class="t" style="left:868.00px;top:158.57px;font-size:11.8px;color:#505050;transform:scaleX(0.8874);">Voice</div>
<div class="t" style="left:929.00px;top:158.57px;font-size:11.8px;color:#505050;transform:scaleX(0.9453);">Editor</div>
<div class="t" style="left:18.06px;top:47.28px;font-size:14.5px;color:#555555;transform:scaleX(0.9417);">File</div>
<div class="t" style="left:70.00px;top:47.28px;font-size:14.5px;color:#404040;font-weight:bold;transform:scaleX(0.9945);">Home</div>
<div class="t" style="left:128.95px;top:47.28px;font-size:14.5px;color:#555555;transform:scaleX(1.0501);">Insert</div>
<div class="t" style="left:187.01px;top:47.28px;font-size:14.5px;color:#555555;transform:scaleX(0.9891);">Draw</div>
<div class="t" style="left:241.51px;top:47.28px;font-size:14.5px;color:#555555;transform:scaleX(0.9870);">Design</div>
<div class="t" style="left:305.99px;top:47.28px;font-size:14.5px;color:#555555;transform:scaleX(1.0116);">Layout</div>
<div class="t" style="left:372.04px;top:47.28px;font-size:14.5px;color:#555555;transform:scaleX(0.9602);">References</div>
<div class="t" style="left:462.97px;top:47.28px;font-size:14.5px;color:#555555;transform:scaleX(1.0301);">Mailings</div>
<div class="t" style="left:538.57px;top:47.28px;font-size:14.5px;color:#555555;transform:scaleX(0.9348);">Review</div>
<div class="t" style="left:605.00px;top:47.28px;font-size:14.5px;color:#555555;transform:scaleX(0.9623);">View</div>
<div class="t" style="left:654.99px;top:47.28px;font-size:14.5px;color:#555555;transform:scaleX(1.0113);">Developer</div>
<div class="t" style="left:740.96px;top:47.28px;font-size:14.5px;color:#555555;transform:scaleX(1.0432);">Help</div>
<div class="a" style="left:70px;top:64px;width:40px;height:3px;background:#2b579a"></div>
<div class="t" style="left:183.30px;top:270.78px;font-size:13.2px;color:#1e1e1e;transform:scaleX(1.0633);-webkit-text-stroke:0.25px #1e1e1e;">Video·provides·a·powerful·way·to·help·you·prove·your·point.·When·you·click·Online·Video,·you·can·paste·</div>
<div class="t" style="left:183.30px;top:291.28px;font-size:13.2px;color:#1e1e1e;transform:scaleX(1.0607);-webkit-text-stroke:0.25px #1e1e1e;">in·the·embed·code·for·the·video·you·want·to·add.·You·can·also·type·a·keyword·to·search·online·for·the·</div>
<div class="t" style="left:183.30px;top:311.58px;font-size:13.2px;color:#1e1e1e;transform:scaleX(1.0763);-webkit-text-stroke:0.25px #1e1e1e;">video·that·best·fits·your·document.·To·make·your·document·look·professionally·produced,·Word·</div>
<div class="t" style="left:183.30px;top:332.58px;font-size:13.2px;color:#1e1e1e;transform:scaleX(1.0669);-webkit-text-stroke:0.25px #1e1e1e;">provides·header,·footer,·cover·page,·and·text·box·designs·that·complement·each·other.¶</div>
<div class="t" style="left:182.25px;top:364.78px;font-size:13.2px;color:#1e1e1e;transform:scaleX(1.0480);-webkit-text-stroke:0.25px #1e1e1e;">For·example,·you·can·add·a·matching·cover·page,·header,·and·sidebar.·Click·Insert·and·then·choose·the·</div>
<div class="t" style="left:183.30px;top:385.28px;font-size:13.2px;color:#1e1e1e;transform:scaleX(1.0677);-webkit-text-stroke:0.25px #1e1e1e;">elements·you·want·from·the·different·galleries.·Themes·and·styles·also·help·keep·your·document·</div>
<div class="t" style="left:183.30px;top:405.58px;font-size:13.2px;color:#1e1e1e;transform:scaleX(1.0588);-webkit-text-stroke:0.25px #1e1e1e;">coordinated.·When·you·click·Design·and·choose·a·new·Theme,·the·pictures,·charts,·and·SmartArt·</div>
<div class="t" style="left:183.30px;top:426.18px;font-size:13.2px;color:#1e1e1e;transform:scaleX(1.0651);-webkit-text-stroke:0.25px #1e1e1e;">graphics·change·to·match·your·new·theme.¶</div>
<div class="t" style="left:183.30px;top:490.18px;font-size:13.2px;color:#1e1e1e;transform:scaleX(1.0628);-webkit-text-stroke:0.25px #1e1e1e;">When·you·apply·styles,·your·headings·change·to·match·the·new·theme.·Save·time·in·Word·with·new·</div>
<div class="t" style="left:183.30px;top:510.58px;font-size:13.2px;color:#1e1e1e;transform:scaleX(1.0699);-webkit-text-stroke:0.25px #1e1e1e;">buttons·that·show·up·where·you·need·them.·To·change·the·way·a·picture·fits·in·your·document,·click·it·</div>
<div class="t" style="left:183.30px;top:530.98px;font-size:13.2px;color:#1e1e1e;transform:scaleX(1.0710);-webkit-text-stroke:0.25px #1e1e1e;">and·a·button·for·layout·options·appears·next·to·it.·When·you·work·on·a·table,·click·where·you·want·to·</div>
<div class="a" style="left:81px;top:546px;width:869px;height:10px;overflow:hidden">
<div class="t" style="left:100.60px;top:5.68px;font-size:13.2px;color:#1e1e1e;transform:scaleX(1.1575);">add·a·row·or·a·column,·and·then·click·the·plus·sign.¶</div>
</div>
<svg width="1024" height="580" style="left:0;top:0"><path d="M187.6,459.9 H186.2 C184.3,459.9 183.4,461.1 183.4,462.7 C183.4,464.3 184.3,465.5 186.2,465.5 H187.6 Z" fill="#111"/><path d="M187.6,459.9 V471.5 M190.1,459.9 V471.5 M186.4,460.4 H190.7" stroke="#111" stroke-width="1.2"/></svg>
<div class="t" style="left:9.00px;top:563.08px;font-size:11.2px;color:#5a5a5a;">Page 1 of 1</div>
<div class="t" style="left:87.50px;top:563.08px;font-size:11.2px;color:#5a5a5a;transform:scaleX(0.9803);">320 words</div>
<div class="t" style="left:156.50px;top:563.08px;font-size:11.2px;color:#5a5a5a;transform:scaleX(0.9612);">1750 characters</div>
<div class="t" style="left:538.00px;top:563.08px;font-size:11.2px;color:#5a5a5a;transform:scaleX(0.9799);">Display Settings</div>
<div class="t" style="left:653.00px;top:563.08px;font-size:11.2px;color:#5a5a5a;transform:scaleX(0.9070);">Focus</div>
<div class="t" style="left:976.00px;top:563.08px;font-size:11.2px;color:#5a5a5a;transform:scaleX(0.9070);">100%</div>
</body></html>
